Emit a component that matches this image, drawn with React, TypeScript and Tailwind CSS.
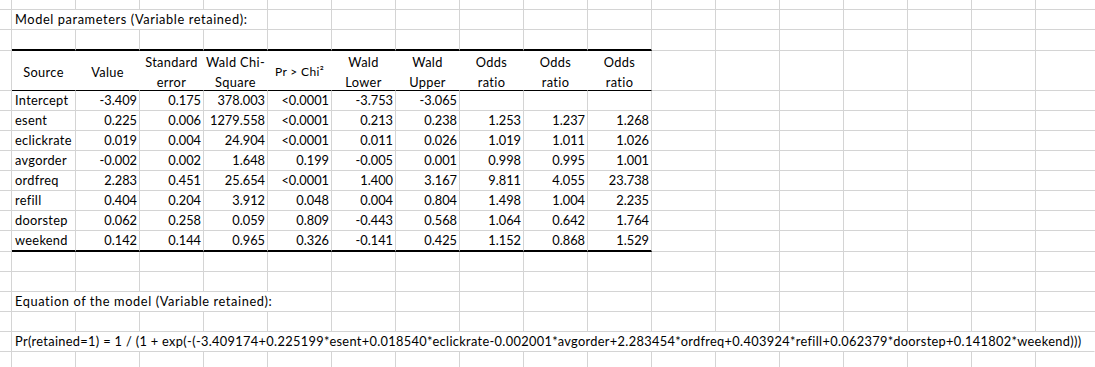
import React from "react";

// spreadsheet grid: 12px partial column, then 64px columns, light grey gridlines
const COLS = 17;
const TABLE_COLS = 10;
const GRID_R = "border-r-[#d4d4d4]";
const GRID_B = "border-b border-b-[#d4d4d4]";
const THICK_B = "border-b-2 border-b-black";

type CellProps = {
    w?: string;
    right?: string;
    bottom?: string;
    className?: string;
    children?: React.ReactNode;
};

const Cell = ({w = "w-[64px]", right = GRID_R, bottom = GRID_B, className = "", children}: CellProps) => (
    <div className={`${w} shrink-0 overflow-visible border-r ${right} ${bottom} ${className}`}>
        {children}
    </div>
);

const Filler = ({count}: {count: number}) => (
    <>
        {Array.from({length: count}).map((_, i) => <Cell key={i} />)}
    </>
);

const BlankRow = ({h}: {h: string}) => (
    <div className={`flex ${h}`}>
        <Cell w="w-[12px]" />
        <Filler count={COLS} />
    </div>
);

const headers: string[][] = [
    ["Source"],
    ["Value"],
    ["Standard", "error"],
    ["Wald Chi-", "Square"],
    ["Pr > Chi²"],
    ["Wald", "Lower"],
    ["Wald", "Upper"],
    ["Odds", "ratio"],
    ["Odds", "ratio"],
    ["Odds", "ratio"],
];

const rows: string[][] = [
    ["Intercept", "-3.409", "0.175", "378.003", "<0.0001", "-3.753", "-3.065", "", "", ""],
    ["esent", "0.225", "0.006", "1279.558", "<0.0001", "0.213", "0.238", "1.253", "1.237", "1.268"],
    ["eclickrate", "0.019", "0.004", "24.904", "<0.0001", "0.011", "0.026", "1.019", "1.011", "1.026"],
    ["avgorder", "-0.002", "0.002", "1.648", "0.199", "-0.005", "0.001", "0.998", "0.995", "1.001"],
    ["ordfreq", "2.283", "0.451", "25.654", "<0.0001", "1.400", "3.167", "9.811", "4.055", "23.738"],
    ["refill", "0.404", "0.204", "3.912", "0.048", "0.004", "0.804", "1.498", "1.004", "2.235"],
    ["doorstep", "0.062", "0.258", "0.059", "0.809", "-0.443", "0.568", "1.064", "0.642", "1.764"],
    ["weekend", "0.142", "0.144", "0.965", "0.326", "-0.141", "0.425", "1.152", "0.868", "1.529"],
];

const equation =
    "Pr(retained=1) = 1 / (1 + exp(-(-3.409174+0.225199*esent+0.018540*eclickrate-0.002001*avgorder+2.283454*ordfreq+0.403924*refill+0.062379*doorstep+0.141802*weekend)))";

const App = () => {
    return (
        <div className="h-[367px] w-[1095px] overflow-hidden bg-white font-['Lato',sans-serif] text-[12.8px] text-black">
            <BlankRow h="h-[10px]" />

            {/* title */}
            <div className="flex h-[20px]">
                <Cell w="w-[12px]" />
                <Cell w="w-[256px]" className="whitespace-nowrap pl-[3px] leading-[19px] tracking-[0.6px]">
                    Model parameters (Variable retained):
                </Cell>
                <Filler count={COLS - 4} />
            </div>

            {/* row above table carries the thick top rule */}
            <div className="flex h-[21px]">
                <Cell w="w-[12px]" />
                {Array.from({length: TABLE_COLS}).map((_, i) => (
                    <Cell key={i} bottom={THICK_B} />
                ))}
                <Filler count={COLS - TABLE_COLS} />
            </div>

            {/* header */}
            <div className="flex h-[40px]">
                <Cell w="w-[12px]" />
                {headers.map((lines, i) => (
                    <Cell
                        key={i}
                        right={i === TABLE_COLS - 1 ? GRID_R : "border-r-white"}
                        bottom="border-b border-b-black"
                        className={`flex flex-col items-center justify-center whitespace-nowrap pt-[2px] text-center leading-[20px] tracking-[0.35px] ${i === 4 ? "text-[12px]" : ""}`}
                    >
                        {lines.map(l => <span key={l}>{l}</span>)}
                    </Cell>
                ))}
                <Filler count={COLS - TABLE_COLS} />
            </div>

            {/* body */}
            {rows.map((r, ri) => {
                const last = ri === rows.length - 1;
                return (
                    <div key={r[0]} className={`flex ${last ? "h-[21px]" : "h-[20px]"}`}>
                        <Cell w="w-[12px]" />
                        {r.map((v, ci) => (
                            <Cell
                                key={ci}
                                bottom={last ? THICK_B : GRID_B}
                                className={`whitespace-nowrap leading-[19px] ${ci === 0 ? "pl-[3px] text-left tracking-[0.3px]" : "pr-[2px] text-right"}`}
                            >
                                {v}
                            </Cell>
                        ))}
                        <Filler count={COLS - TABLE_COLS} />
                    </div>
                );
            })}

            <BlankRow h="h-[20px]" />
            <BlankRow h="h-[20px]" />

            <div className="flex h-[20px]">
                <Cell w="w-[12px]" />
                <Cell w="w-[320px]" className="whitespace-nowrap pl-[3px] leading-[19px] tracking-[0.6px]">
                    Equation of the model (Variable retained):
                </Cell>
                <Filler count={COLS - 5} />
            </div>

            <BlankRow h="h-[20px]" />

            <div className="flex h-[20px]">
                <Cell w="w-[12px]" />
                <Cell w="flex-1" right="border-r-transparent" className="whitespace-nowrap pl-[3px] leading-[19px] tracking-[0.33px]">
                    {equation}
                </Cell>
            </div>

            <BlankRow h="h-[20px]" />
        </div>
    );
};

export default App;
